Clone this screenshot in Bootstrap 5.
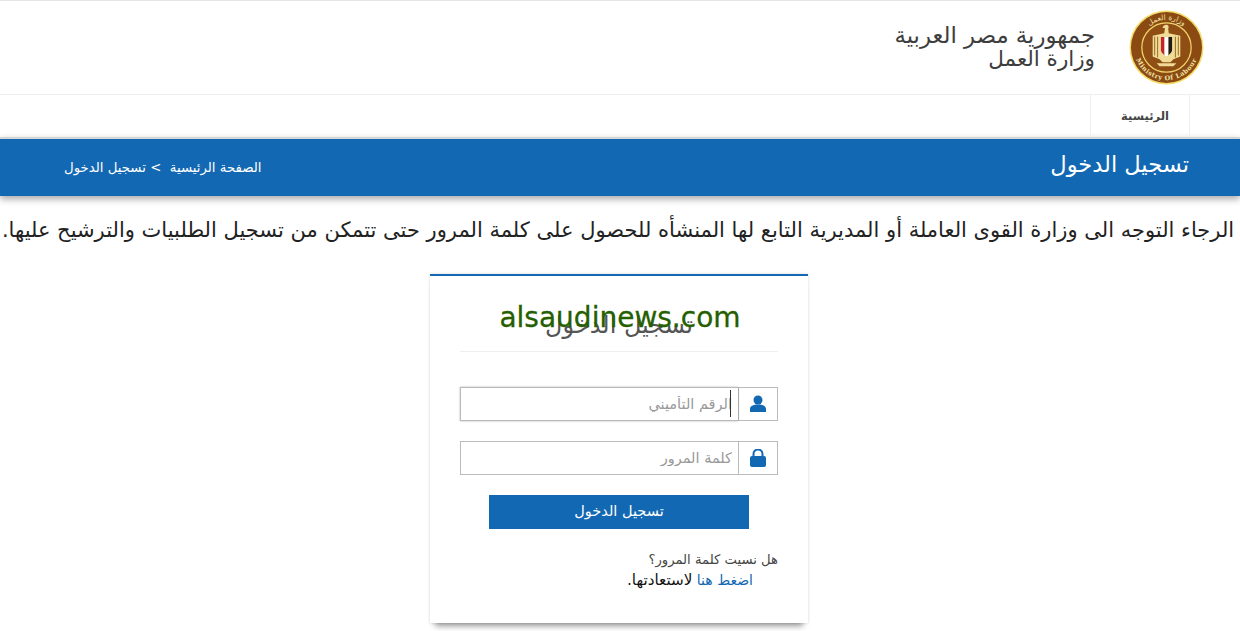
<!DOCTYPE html>
<html lang="ar" dir="rtl">
<head>
  <meta charset="UTF-8" />
  <meta name="viewport" content="width=device-width, initial-scale=1.0"/>
  <title>تسجيل الدخول</title>
  <link href="https://cdn.jsdelivr.net/npm/bootstrap@5.3.0/dist/css/bootstrap.min.css" rel="stylesheet" />
  <style>
    :root {
      --brand: #1268b3;
      --ink: #3d3d3d;
    }

    html, body {
      height: 631px;
      overflow: hidden;
    }

    body {
      background: #fff;
      color: #222;
      font-family: "DejaVu Sans", "Noto Sans", sans-serif;
    }

    .top-head {
      height: 95px;
      border-top: 1px solid #e4e4e4;
      border-bottom: 1px solid #eee;
      padding-right: 36px;
      gap: 34px;
    }

    .top-head h1 {
      font-size: 22.8px;
      line-height: 24px;
      font-weight: 400;
      color: var(--ink);
      margin: 0;
    }

    .top-head h1 + h1 {
      font-size: 21.5px;
      margin-bottom: 1px;
    }

    .main-menu {
      height: 42px;
      padding-right: 50px;
    }

    .main-menu a {
      display: block;
      width: 100px;
      height: 42px;
      line-height: 42px;
      padding-left: 10px;
      text-align: center;
      font-size: 11.5px;
      font-weight: 700;
      color: #444;
      text-decoration: none;
      border-left: 1px solid #eee;
      border-right: 1px solid #eee;
    }

    .title-band {
      height: 59px;
      background: var(--brand);
      border-top: 2px solid #d5d5d5;
      color: #fff;
      padding: 0 51px 0 64px;
      box-shadow: 0 3px 7px rgba(0, 0, 0, .35);
    }

    .title-band h2 {
      font-size: 22.5px;
      font-weight: 400;
      margin: 0 0 6px;
      white-space: nowrap;
    }

    .crumbs {
      font-size: 13.3px;
      white-space: nowrap;
    }

    .notice {
      font-size: 21px;
      line-height: 26px;
      text-align: center;
      white-space: nowrap;
      margin: 21px 0 31px -4px;
      color: #222;
    }

    .login-box {
      width: 378px;
      height: 349px;
      margin: 0 432px 0 auto;
      border-top: 2px solid var(--brand);
      background: #fff;
      padding: 0 30px;
      box-shadow: 0 0 3px rgba(0, 0, 0, .15), 0 8px 6px -5px rgba(0, 0, 0, .4);
    }

    .login-title {
      height: 76px;
      padding-top: 33px;
      border-bottom: 1px solid #eee;
      font-size: 24px;
      line-height: 32px;
      text-align: center;
      font-weight: 400;
      color: #555;
      margin: 0 0 35px;
    }

    .stamp {
      position: absolute;
      top: 24px;
      left: 2px;
      right: 0;
      text-align: center;
      direction: ltr;
      font-size: 28px;
      line-height: 36px;
      color: #255f00;
      -webkit-text-stroke: .3px #255f00;
    }

    .login-box .input-group {
      height: 34px;
      margin-bottom: 20px;
    }

    .login-box .input-group-text {
      width: 40px;
      height: 34px;
      padding: 0;
      justify-content: center;
      background: #fff;
      border: 1px solid #bbb;
      border-radius: 0;
    }

    .login-box .input-group .form-control {
      height: 34px;
      padding: 0 6px 1px;
      font-size: 14.5px;
      border: 1px solid #bbb;
      border-right: 0;
      border-radius: 0;
      color: #333;
    }

    .login-box .form-control::placeholder {
      color: #999;
    }

    .login-box .input-group .focused {
      box-shadow: 0 0 2px rgba(0, 0, 0, .3);
    }

    .caret-line {
      position: absolute;
      top: 3px;
      right: 47px;
      width: 1px;
      height: 27px;
      background: #333;
      z-index: 6;
    }

    .login-btn {
      display: block;
      width: 260px;
      height: 34px;
      margin: 0 auto 20px;
      padding: 0 0 1px;
      background: var(--brand);
      color: #fff;
      font-size: 14.5px;
      border: 0;
      border-radius: 0;
    }

    .forgot {
      font-size: 13.2px;
      line-height: 21px;
      color: #444;
      margin: 0;
    }

    .forgot a {
      color: var(--brand);
      text-decoration: none;
    }

    .forgot .restore-line {
      display: block;
      padding-right: 25px;
      font-size: 14px;
      color: #111;
    }

    .forgot .restore-word {
      font-size: 15.2px;
    }
  </style>
</head>
<body>

<header class="top-head d-flex align-items-center">
  <svg width="75" height="75" viewBox="0 0 76 76">
    <defs>
      <path id="arcLow" d="M5 38a33 33 0 0 0 66 0"/>
      <path id="arcTop" d="M10 38a28 28 0 0 1 56 0"/>
      <clipPath id="shieldClip"><path d="M32 27h12v12c0 4-3 6-6 8-3-2-6-4-6-8z"/></clipPath>
    </defs>
    <circle cx="38" cy="38" r="37.500" fill="#f3dc6a"/>
    <circle cx="38" cy="38" r="36" fill="#8a4a12"/>
    <circle cx="38" cy="38" r="25" fill="#8f4f14" stroke="#efd26a" stroke-width="1.300"/>
    <!-- eagle -->
    <path d="M38 15c-2 0-3.500 1.200-4 3l2.500 .5-.8 5-11.700 2.500v21l7 3 3 3h8l3-3 7-3V26l-11.700-2.500-.6-4.500c1.200-1.500 0-4-1.700-4z" fill="#f0dc96"/>
    <path d="M26 27v19M29 27v21M47 27v21M50 27v19" stroke="#9a6a24" stroke-width="1"/>
    <g clip-path="url(#shieldClip)">
      <rect x="32" y="27" width="4" height="21" fill="#c4242b"/>
      <rect x="36" y="27" width="4" height="21" fill="#fff"/>
      <rect x="40" y="27" width="4" height="21" fill="#1d1a18"/>
    </g>
    <path d="M28 54h20l-3 3H31z" fill="#f0dc96"/>
    <text font-family="DejaVu Serif, serif" font-size="6.500" font-weight="700" letter-spacing=".5" fill="#f3e4a6" direction="ltr"><textPath href="#arcLow" startOffset="50%" text-anchor="middle">Ministry Of Labour</textPath></text>
    <text font-family="DejaVu Sans, sans-serif" font-size="7.500" fill="#efe0a0"><textPath href="#arcTop" startOffset="50%" text-anchor="middle">وزارة العمل</textPath></text>
  </svg>
  <div>
    <h1>جمهورية مصر العربية</h1>
    <h1>وزارة العمل</h1>
  </div>
</header>

<nav class="main-menu d-flex">
  <a href="#">الرئيسية</a>
</nav>

<section class="title-band d-flex align-items-center justify-content-between">
  <h2>تسجيل الدخول</h2>
  <div class="crumbs">الصفحة الرئيسية &nbsp;&gt; تسجيل الدخول</div>
</section>

<p class="notice">الرجاء التوجه الى وزارة القوى العاملة أو المديرية التابع لها المنشأه للحصول على كلمة المرور حتى تتمكن من تسجيل الطلبيات والترشيح عليها.</p>

<main class="login-box position-relative">
  <h3 class="login-title">تسجيل الدخول</h3>
  <div class="stamp">alsaudinews.com</div>
  <form>
    <div class="input-group position-relative">
      <span class="input-group-text">
        <svg width="16" height="18" viewBox="0 0 16 18"><circle cx="8" cy="5" r="4.500" fill="#1268b3"/><path d="M0 17v-3c0-3 3-4.500 8-4.500s8 1.500 8 4.500v3z" fill="#1268b3"/></svg>
      </span>
      <input type="text" class="form-control ms-0 focused" placeholder="الرقم التأميني" />
      <span class="caret-line"></span>
    </div>
    <div class="input-group">
      <span class="input-group-text">
        <svg width="16" height="18" viewBox="0 0 16 18"><path d="M3.500 8V5a4.500 4.500 0 0 1 9 0v3" fill="none" stroke="#1268b3" stroke-width="2"/><rect y="7" width="16" height="11" rx="2" fill="#1268b3"/></svg>
      </span>
      <input type="password" class="form-control ms-0" placeholder="كلمة المرور" />
    </div>
    <button type="submit" class="btn login-btn">تسجيل الدخول</button>
    <p class="forgot">هل نسيت كلمة المرور؟<span class="restore-line"><a href="#">اضغط هنا</a> <span class="restore-word">لاستعادتها.</span></span></p>
  </form>
</main>

<script src="https://cdn.jsdelivr.net/npm/bootstrap@5.3.0/dist/js/bootstrap.bundle.min.js"></script>
</body>
</html>
